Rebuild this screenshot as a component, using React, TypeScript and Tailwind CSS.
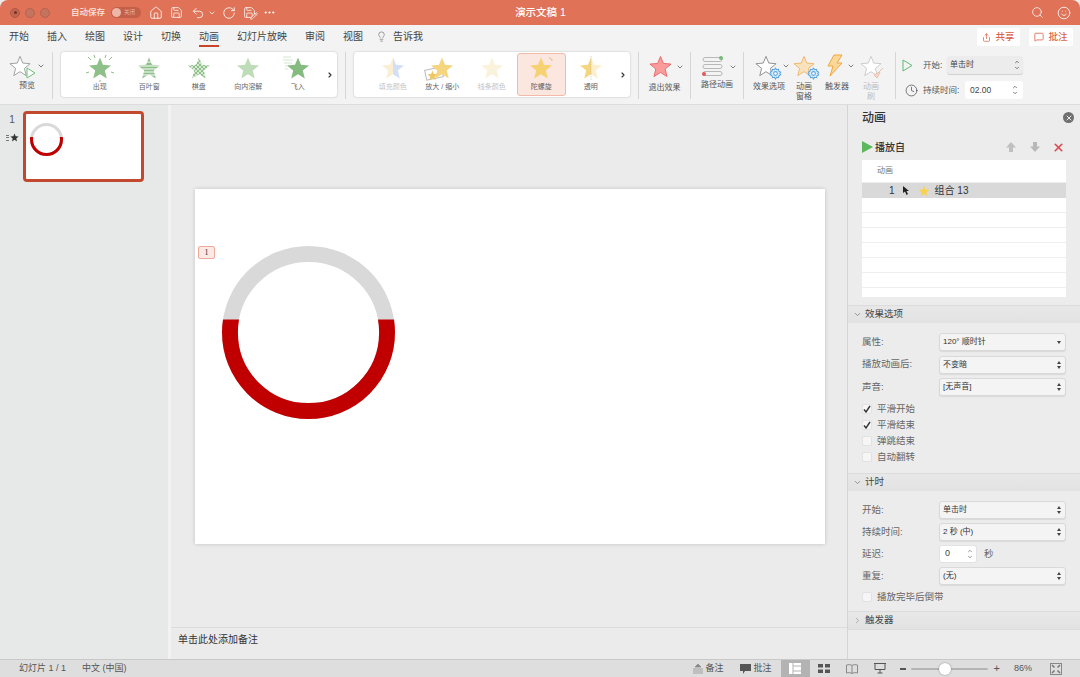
import { ChevronDown, ChevronRight, ChevronUp, Clock, House, Lightbulb, MessageSquare, MoreHorizontal, Pencil, RotateCw, Save, Search, Share, Smile, Undo2, X } from 'lucide-react';
import type { ReactNode } from 'react';

const STAR = '12,1.5 15,8.8 23,9.5 16.8,14.6 18.8,22.5 12,18.2 5.2,22.5 7.2,14.6 1,9.5 9,8.8';

function Star({ size = 24, fill = '#8fc08a', stroke = 'none', children }: { size?: number; fill?: string; stroke?: string; children?: ReactNode }) {
  return (
    <svg width={size} height={size} viewBox="0 0 24 24" className="shrink-0 overflow-visible">
      <polygon points={STAR} fill={fill} stroke={stroke} strokeWidth="1" strokeLinejoin="round" />
      {children}
    </svg>
  );
}

function Ring({ size, id }: { size: number; id: string }) {
  return (
    <svg width={size} height={size} viewBox="0 0 174 174" className="block">
      <defs>
        <clipPath id={id}>
          <rect x="0" y="74" width="174" height="100" />
        </clipPath>
      </defs>
      <circle cx="87" cy="87" r="79" fill="none" stroke="#d9d9d9" strokeWidth="16" />
      <circle cx="87" cy="87" r="79" fill="none" stroke="#c00000" strokeWidth="16" clipPath={`url(#${id})`} />
    </svg>
  );
}

function GalleryItem({ label, faded, active, children }: { label: string; faded?: boolean; active?: boolean; children: ReactNode }) {
  return (
    <div className={`w-[49.5px] h-[43px] flex flex-col items-center pt-[1px] rounded-[3px] border ${active ? 'bg-[#fbe6e0] border-[#f3b9aa]' : 'border-transparent'}`}>
      <div className="h-[26px] flex items-center justify-center">{children}</div>
      <span className={`mt-[1px] text-[7px] leading-[10px] whitespace-nowrap ${faded ? 'text-[#c4c4c4]' : 'text-[#666666]'}`}>{label}</span>
    </div>
  );
}

function Gallery({ children }: { children: ReactNode }) {
  return (
    <div className="mt-[2px] ml-[8px] w-[276px] h-[45px] bg-white rounded-[3px] shadow-[0_0_2px_rgba(0,0,0,0.25)] flex items-center pl-[14px]">
      {children}
      <div className="flex-1 flex justify-center">
        <ChevronRight size={8} strokeWidth={3.5} className="text-[#333333]" />
      </div>
    </div>
  );
}

function Divider({ className = '' }: { className?: string }) {
  return <div className={`mt-[2px] w-px h-[47px] bg-[#d6d6d6] shrink-0 ${className}`} />;
}

function RibbonLabel({ children, gray }: { children: ReactNode; gray?: boolean }) {
  return <div className={`text-[8px] leading-[10px] text-center whitespace-nowrap ${gray ? 'text-[#bdbdbd]' : 'text-[#555555]'}`}>{children}</div>;
}

function Gear({ size = 13 }: { size?: number }) {
  return (
    <svg width={size} height={size} viewBox="0 0 24 24" fill="#dceefb" stroke="#5aa5e0" strokeWidth="2">
      <path d="M12 2l2 3 3.5-.8.8 3.5 3.2 2-1.5 2.3 1.5 2.3-3.2 2-.8 3.5-3.5-.8-2 3-2-3-3.5.8-.8-3.5-3.2-2L3.800 12 2.300 9.700l3.200-2 .8-3.500 3.500.8z" />
      <circle cx="12" cy="12" r="3.500" fill="#ffffff" />
    </svg>
  );
}

function Field({ label, children }: { label: string; children: ReactNode }) {
  return (
    <div className="flex items-center h-[18px]">
      <span className="w-[77px] text-[9.5px] text-[#666666] whitespace-nowrap">{label}</span>
      {children}
    </div>
  );
}

function Select({ value, single }: { value: string; single?: boolean }) {
  return (
    <div className="w-[127px] h-[18px] px-[3px] flex items-center justify-between rounded-[3px] border border-[#d9d9d9] bg-[#f4f4f4] shadow-[0_1px_1px_rgba(0,0,0,0.08)] text-[8px] text-[#333333] whitespace-nowrap">
      <span>{value}</span>
      {single ? (
        <span className="w-0 h-0 mr-[1px] border-x-[2px] border-x-transparent border-t-[3px] border-t-[#444444]" />
      ) : (
        <span className="flex flex-col gap-[2px] mr-[1px]">
          <span className="w-0 h-0 border-x-[2px] border-x-transparent border-b-[3px] border-b-[#444444]" />
          <span className="w-0 h-0 border-x-[2px] border-x-transparent border-t-[3px] border-t-[#444444]" />
        </span>
      )}
    </div>
  );
}

function Check({ label, checked }: { label: string; checked?: boolean }) {
  return (
    <div className="flex items-center h-[16px]">
      <span className="w-[10px] h-[10px] rounded-[2px] bg-[#f6f6f6] border border-[#e2e2e2] flex items-center justify-center">
        {checked && (
          <svg width="8" height="8" viewBox="0 0 8 8"><path d="M1 4.500L3 7l4-6" fill="none" stroke="#333333" strokeWidth="1.400" /></svg>
        )}
      </span>
      <span className="ml-[5px] text-[9.5px] text-[#666666]">{label}</span>
    </div>
  );
}

function Section({ label, open }: { label: string; open?: boolean }) {
  return (
    <div className="h-[18px] flex items-center pl-[5px] bg-gradient-to-b from-[#e8e8e8] to-[#e2e2e2] border-t border-[#dcdcdc] text-[9.5px] text-[#444444]">
      {open ? <ChevronDown size={9} className="text-[#777777]" /> : <ChevronRight size={9} className="text-[#999999]" />}
      <span className="ml-[3px]">{label}</span>
    </div>
  );
}

export default function App() {
  return (
    <div className="w-[1080px] h-[677px] overflow-hidden flex flex-col bg-[#ebebeb] text-[#333333] font-['Liberation_Sans','Noto_Sans_CJK_SC',sans-serif]">
      {/* title bar */}
      <div className="h-[25px] shrink-0 flex items-center bg-[#df7257] rounded-t-[8px] text-white">
        <div className="flex-1 flex items-center pl-[10px]">
          <span className="w-[10px] h-[10px] rounded-full bg-[#c4644e] border border-[#b15a46] flex items-center justify-center"><span className="w-[3px] h-[3px] rounded-full bg-[#6e3427]" /></span>
          <span className="ml-[5px] w-[10px] h-[10px] rounded-full bg-[#c4735f] border border-[#b86350]" />
          <span className="ml-[5px] w-[10px] h-[10px] rounded-full bg-[#c4735f] border border-[#b86350]" />
          <span className="ml-[21px] text-[8.5px] font-medium text-[#fbe6df] whitespace-nowrap">自动保存</span>
          <span className="ml-[6px] w-[30px] h-[11px] rounded-full bg-[#c2604a] flex items-center">
            <span className="ml-[1px] w-[9px] h-[9px] rounded-full bg-[#eeb6a7]" />
            <span className="ml-[3px] text-[5.5px] text-[#eeb6a7]">关闭</span>
          </span>
          <House size={14} strokeWidth={1.4} className="ml-[8px]" />
          <Save size={13} strokeWidth={1.4} className="ml-[7px]" />
          <Undo2 size={14} strokeWidth={1.4} className="ml-[8px]" />
          <ChevronDown size={8} strokeWidth={2.5} className="ml-[3px]" />
          <RotateCw size={14} strokeWidth={1.4} className="ml-[6px]" />
          <span className="ml-[7px] relative">
            <Save size={13} strokeWidth={1.4} />
            <Pencil size={8} strokeWidth={2} fill="#df7257" className="absolute right-[-2px] bottom-[-1px]" />
          </span>
          <MoreHorizontal size={13} strokeWidth={2} className="ml-[7px]" />
        </div>
        <span className="text-[10.5px] font-medium whitespace-nowrap">演示文稿 1</span>
        <div className="flex-1 flex items-center justify-end pr-[9px]">
          <Search size={13} strokeWidth={1.4} />
          <Smile size={14} strokeWidth={1.4} className="ml-[13px]" />
        </div>
      </div>

      {/* tabs */}
      <div className="h-[25px] shrink-0 flex items-start pl-[9px] bg-[#f3f3f3] text-[10px] text-[#444444]">
        <div className="flex items-center gap-[18px] h-[23px]">
          <span>开始</span>
          <span>插入</span>
          <span>绘图</span>
          <span>设计</span>
          <span>切换</span>
          <span className="relative">动画<span className="absolute left-0 right-0 top-[16px] h-[2px] bg-[#c8442a]" /></span>
          <span>幻灯片放映</span>
          <span>审阅</span>
          <span>视图</span>
        </div>
        <div className="ml-[13px] h-[23px] flex items-center">
          <Lightbulb size={11} strokeWidth={1.2} className="text-[#555555]" />
          <span className="ml-[6px]">告诉我</span>
        </div>
        <div className="ml-auto mt-[3px] flex gap-[9px] pr-[7px] text-[#d9674c] text-[9.5px] font-medium">
          <span className="w-[43px] h-[18px] bg-white rounded-[2px] flex items-center justify-center gap-[4px]"><Share size={9} />共享</span>
          <span className="w-[44px] h-[18px] bg-white rounded-[2px] flex items-center justify-center gap-[4px]"><MessageSquare size={10} />批注</span>
        </div>
      </div>

      {/* ribbon */}
      <div className="h-[55px] shrink-0 flex items-start pl-[10px] bg-[#f3f3f3] border-b border-[#dcdcdc]">
        <div className="w-[34px] shrink-0 flex flex-col items-center pt-[5px]">
          <div className="flex items-center">
            <span className="relative flex">
              <Star size={22} fill="#ffffff" stroke="#9a9a9a" />
              <svg width="10" height="12" viewBox="0 0 10 12" className="absolute right-[-5px] bottom-[-2px]"><polygon points="1,1 9,6 1,11" fill="#ffffff" stroke="#6cc07a" strokeWidth="1" /></svg>
            </span>
            <ChevronDown size={8} strokeWidth={2.5} className="ml-[6px] text-[#666666]" />
          </div>
          <div className="mt-[4px]"><RibbonLabel>预览</RibbonLabel></div>
        </div>
        <Divider className="ml-[8px]" />
        <Gallery>
          <GalleryItem label="出现">
            <Star>
              <path d="M0 1l3 3M24 1l-3 3M-2 17l3-1M26 17l-3-1M12 26v-2M6 -1l1 3M18 -1l-1 3" stroke="#8fc08a" strokeWidth="1" />
            </Star>
          </GalleryItem>
          <GalleryItem label="百叶窗">
            <Star>
              <path d="M0 6h24M0 10h24M0 13h24M0 16h24M0 19h24" stroke="#ffffff" strokeWidth="1" />
            </Star>
          </GalleryItem>
          <GalleryItem label="棋盘">
            <svg width="24" height="24" viewBox="0 0 24 24" className="shrink-0">
              <defs>
                <pattern id="checker" width="4" height="4" patternUnits="userSpaceOnUse">
                  <rect width="4" height="4" fill="#d5e8d2" />
                  <rect width="2" height="2" fill="#8fc08a" />
                  <rect x="2" y="2" width="2" height="2" fill="#8fc08a" />
                </pattern>
              </defs>
              <polygon points={STAR} fill="url(#checker)" />
            </svg>
          </GalleryItem>
          <GalleryItem label="向内溶解">
            <Star fill="#bfdcb8" />
          </GalleryItem>
          <GalleryItem label="飞入">
            <Star fill="#86bb80">
              <path d="M-3 1h8M-3 4h10M-2 7h8M-1 10h2M-1 13h3" stroke="#c6e0c1" strokeWidth="0.8" />
            </Star>
          </GalleryItem>
        </Gallery>
        <Divider className="ml-[8px]" />
        <Gallery>
          <GalleryItem label="填充颜色" faded>
            <svg width="24" height="24" viewBox="0 0 24 24" className="shrink-0">
              <defs>
                <linearGradient id="fillsplit">
                  <stop offset="0.5" stopColor="#faefd2" />
                  <stop offset="0.5" stopColor="#d3dff5" />
                </linearGradient>
              </defs>
              <polygon points={STAR} fill="url(#fillsplit)" />
            </svg>
          </GalleryItem>
          <GalleryItem label="放大 / 缩小">
            <span className="relative flex">
              <span className="absolute left-[-5px] bottom-[1px] w-[18px] h-[11px] bg-white border border-[#bbbbbb] -rotate-12" />
              <span className="relative flex"><Star fill="#f5d67e" /></span>
              <span className="absolute left-[-3px] bottom-[-1px]"><Star size={11} fill="#efc763" /></span>
            </span>
          </GalleryItem>
          <GalleryItem label="线条颜色" faded>
            <Star fill="#fbf2dc" />
          </GalleryItem>
          <GalleryItem label="陀螺旋" active>
            <Star fill="#f6d272">
              <path d="M20 2c2 0 3 1 3 3" fill="none" stroke="#e0a84a" strokeWidth="0.7" />
            </Star>
          </GalleryItem>
          <GalleryItem label="透明">
            <svg width="24" height="24" viewBox="0 0 24 24" className="shrink-0">
              <defs>
                <linearGradient id="alphasplit">
                  <stop offset="0.5" stopColor="#f5d67e" />
                  <stop offset="0.5" stopColor="#fbefcd" />
                </linearGradient>
              </defs>
              <polygon points={STAR} fill="url(#alphasplit)" />
              <path d="M12 0v24" stroke="#a8a8a8" strokeWidth="0.5" strokeDasharray="1.5 1" />
            </svg>
          </GalleryItem>
        </Gallery>
        <Divider className="ml-[8px]" />
        <div className="w-[51px] shrink-0 flex flex-col items-center pt-[5px]">
          <div className="flex items-center pl-[4px]">
            <Star size={23} fill="#fb9c9c" stroke="#e86a6a" />
            <ChevronDown size={8} strokeWidth={2.5} className="ml-[4px] text-[#666666]" />
          </div>
          <div className="mt-[5px]"><RibbonLabel>退出效果</RibbonLabel></div>
        </div>
        <Divider />
        <div className="w-[52px] shrink-0 flex flex-col items-center pt-[6px]">
          <div className="flex items-center pl-[4px]">
            <svg width="22" height="21" viewBox="0 0 22 21" className="overflow-visible">
              <rect x="1" y="1.500" width="19" height="4" rx="2" fill="none" stroke="#a8a8a8" strokeWidth="0.8" />
              <rect x="1" y="8.500" width="19" height="4" rx="2" fill="none" stroke="#a8a8a8" strokeWidth="0.8" />
              <rect x="1" y="15.500" width="19" height="4" rx="2" fill="none" stroke="#a8a8a8" strokeWidth="0.8" />
              <circle cx="19" cy="2" r="2" fill="#77bb77" />
              <circle cx="2" cy="18" r="2" fill="#e25a5a" />
            </svg>
            <ChevronDown size={8} strokeWidth={2.5} className="ml-[5px] text-[#666666]" />
          </div>
          <div className="mt-[3px]"><RibbonLabel>路径动画</RibbonLabel></div>
        </div>
        <Divider />
        <div className="ml-[2px] w-[46px] shrink-0 pt-[5px] flex flex-col items-center">
          <div className="flex items-center pl-[6px]">
            <span className="relative flex">
              <Star size={22} fill="#ffffff" stroke="#8a8a8a" />
              <span className="absolute right-[-5px] bottom-[-3px]"><Gear /></span>
            </span>
            <ChevronDown size={8} strokeWidth={2.5} className="ml-[5px] text-[#666666]" />
          </div>
          <div className="mt-[5px]"><RibbonLabel>效果选项</RibbonLabel></div>
        </div>
        <div className="w-[24px] shrink-0 pt-[5px] flex flex-col items-center">
          <span className="relative flex">
            <Star size={22} fill="#fbe2bd" stroke="#f0b468" />
            <span className="absolute right-[-5px] bottom-[-3px]"><Gear /></span>
          </span>
          <div className="mt-[5px]"><RibbonLabel>动画<br />窗格</RibbonLabel></div>
        </div>
        <div className="ml-[2px] w-[38px] shrink-0 pt-[4px] flex flex-col items-center">
          <div className="flex items-center pl-[8px]">
            <svg width="16" height="23" viewBox="0 0 16 23">
              <polygon points="7,1 15,1 10,9 15,9 3,22 6,12 1,12" fill="#fbd79a" stroke="#f2a73c" strokeWidth="1" strokeLinejoin="round" />
            </svg>
            <ChevronDown size={8} strokeWidth={2.5} className="ml-[4px] text-[#666666]" />
          </div>
          <div className="mt-[5px]"><RibbonLabel>触发器</RibbonLabel></div>
        </div>
        <div className="w-[30px] shrink-0 pt-[5px] flex flex-col items-center">
          <span className="relative flex">
            <Star size={22} fill="#ffffff" stroke="#c8c8c8" />
            <svg width="10" height="12" viewBox="0 0 10 12" className="absolute right-[-2px] bottom-[-2px]"><path d="M9 1L4 6M6 5L3 11 0 8z" fill="#f8d8c4" stroke="#e8c2ae" /></svg>
          </span>
          <div className="mt-[5px]"><RibbonLabel gray>动画<br />刷</RibbonLabel></div>
        </div>
        <Divider className="ml-[9px]" />
        <div className="pl-[6px] pt-[6px] flex flex-col gap-[7px] text-[8.5px] text-[#555555]">
          <div className="flex items-center h-[18px]">
            <svg width="11" height="13" viewBox="0 0 11 13"><polygon points="1,1 10,6.500 1,12" fill="none" stroke="#5dbb72" strokeWidth="1" /></svg>
            <span className="ml-[10px] w-[24px]">开始:</span>
            <div className="w-[76px] h-[18px] px-[3px] rounded-[3px] bg-[#ececec] shadow-[0_1px_1px_rgba(0,0,0,0.15)] flex items-center justify-between text-[8px] text-[#444444]">
              单击时
              <span className="flex flex-col text-[#555555]"><ChevronUp size={6} strokeWidth={3} /><ChevronDown size={6} strokeWidth={3} /></span>
            </div>
          </div>
          <div className="flex items-center h-[18px] pl-[3px]">
            <Clock size={13} strokeWidth={1.3} className="text-[#444444]" />
            <span className="ml-[5px] w-[42px] whitespace-nowrap">持续时间:</span>
            <div className="w-[58px] h-[18px] px-[5px] rounded-[3px] bg-white flex items-center justify-between text-[8.5px] text-[#444444]">
              02.00
              <span className="flex flex-col text-[#555555]"><ChevronUp size={6} strokeWidth={3} /><ChevronDown size={6} strokeWidth={3} /></span>
            </div>
          </div>
        </div>
      </div>

      {/* body */}
      <div className="flex-1 min-h-0 flex">
        <div className="w-[168px] shrink-0 bg-[#e7e8e8] flex items-start pl-[4px] pt-[6px]">
          <div className="w-[19px] pr-[3px] flex flex-col items-center">
            <span className="mt-[2px] text-[10px] leading-[14px] text-[#555555]">1</span>
            <span className="mt-[6px] flex items-center">
              <span className="flex flex-col gap-[1.5px] mr-[1px]">
                <span className="w-[3px] h-px bg-[#777777]" />
                <span className="w-[3px] h-px bg-[#777777]" />
                <span className="w-[3px] h-px bg-[#777777]" />
              </span>
              <Star size={9} fill="#333333" />
            </span>
          </div>
          <div className="w-[121px] h-[71px] bg-white rounded-[4px] border-[3px] border-[#c2492d] pl-[4px] pt-[9px]">
            <Ring size={33} id="ring-thumb" />
          </div>
        </div>
        <div className="w-[3px] shrink-0 bg-[#f2f2f2]" />
        <div className="flex-1 min-w-0 flex flex-col">
          <div className="flex-1 min-h-0 pl-[24px] pt-[84px] bg-[#ebebeb]">
            <div className="relative w-[630px] h-[355px] bg-white shadow-[0_0_4px_rgba(0,0,0,0.18)]">
              <span className="absolute left-[3px] top-[57px] w-[17px] h-[13px] rounded-[2px] bg-[#fbe9e5] border border-[#efa99a] flex items-center justify-center text-[9px] text-[#444444] font-['Liberation_Serif',serif]">1</span>
              <div className="absolute left-[27px] top-[57px]">
                <Ring size={173} id="ring-slide" />
              </div>
            </div>
          </div>
          <div className="h-[32px] shrink-0 border-t border-[#dcdcdc] pl-[7px] pt-[4px] text-[10px] text-[#333333]">单击此处添加备注</div>
        </div>

        {/* animation pane */}
        <div className="w-[233px] shrink-0 border-l border-[#d4d4d4] bg-[#ececec] flex flex-col">
          <div className="h-[25px] shrink-0 flex items-center justify-between pl-[14px] pr-[6px]">
            <span className="text-[12px] font-medium text-[#333333]">动画</span>
            <span className="w-[11px] h-[11px] rounded-full bg-[#6f6f6f] flex items-center justify-center"><X size={8} strokeWidth={3} className="text-[#ececec]" /></span>
          </div>
          <div className="h-[30px] shrink-0 flex items-center pl-[14px] pr-[15px] pt-[4px]">
            <svg width="11" height="12" viewBox="0 0 11 12"><polygon points="0,0 11,6 0,12" fill="#5cb85c" /></svg>
            <span className="ml-[2px] text-[10px] font-medium text-[#333333]">播放自</span>
            <svg width="12" height="12" viewBox="0 0 12 12" className="ml-auto"><path d="M6 1L1 6.500h3V11h4V6.500h3z" fill="#c0c0c0" /></svg>
            <svg width="12" height="12" viewBox="0 0 12 12" className="ml-[12px]"><path d="M6 11L1 5.500h3V1h4v4.500h3z" fill="#b8b8b8" /></svg>
            <X size={13} strokeWidth={3} className="ml-[11px] text-[#e0474c]" />
          </div>
          <div className="mx-[14px] w-[204px] h-[137px] shrink-0 bg-white flex flex-col text-[#333333]">
            <div className="h-[23px] flex items-center pl-[15px] text-[8px] text-[#777777] border-b border-[#eeeeee]">动画</div>
            <div className="h-[15px] flex items-center bg-[#d9d9d9] text-[10px]">
              <span className="ml-[27px]">1</span>
              <svg width="6" height="9" viewBox="0 0 6 9" className="ml-[8px]"><polygon points="0,0 0,7 2,5.500 3.500,9 5,8 3.500,5 6,5" fill="#222222" /></svg>
              <span className="ml-[9px]"><Star size={12} fill="#fbd24e" /></span>
              <span className="ml-[5px]">组合 13</span>
            </div>
            <div className="h-[15px] border-b border-[#eeeeee]" />
            <div className="h-[15px] border-b border-[#eeeeee]" />
            <div className="h-[15px] border-b border-[#eeeeee]" />
            <div className="h-[15px] border-b border-[#eeeeee]" />
            <div className="h-[15px] border-b border-[#eeeeee]" />
            <div className="h-[15px] border-b border-[#eeeeee]" />
          </div>
          <div className="h-[8px] shrink-0" />
          <Section label="效果选项" open />
          <div className="h-[150px] shrink-0 pl-[14px] pt-[10px] flex flex-col">
            <div className="flex flex-col gap-[4.500px]">
              <Field label="属性:"><Select value="120° 顺时针" single /></Field>
              <Field label="播放动画后:"><Select value="不变暗" /></Field>
              <Field label="声音:"><Select value="[无声音]" /></Field>
            </div>
            <div className="mt-[5px] flex flex-col">
              <Check label="平滑开始" checked />
              <Check label="平滑结束" checked />
              <Check label="弹跳结束" />
              <Check label="自动翻转" />
            </div>
          </div>
          <Section label="计时" open />
          <div className="h-[120px] shrink-0 pl-[14px] pt-[10px] flex flex-col gap-[4px]">
            <Field label="开始:"><Select value="单击时" /></Field>
            <Field label="持续时间:"><Select value="2 秒 (中)" /></Field>
            <Field label="延迟:">
              <div className="w-[38px] h-[18px] pl-[5px] pr-[3px] flex items-center justify-between rounded-[3px] bg-white border border-[#e2e2e2] text-[9px] text-[#444444]">
                0
                <span className="flex flex-col text-[#777777]"><ChevronUp size={6} strokeWidth={3} /><ChevronDown size={6} strokeWidth={3} /></span>
              </div>
              <span className="ml-[7px] text-[9.5px] text-[#666666]">秒</span>
            </Field>
            <Field label="重复:"><Select value="(无)" /></Field>
            <Check label="播放完毕后倒带" />
          </div>
          <Section label="触发器" />
          <div className="flex-1 border-t border-[#dcdcdc]" />
        </div>
      </div>

      {/* status bar */}
      <div className="h-[18px] shrink-0 flex items-center pl-[19px] bg-[#dedede] border-t border-[#c8c8c8] text-[9px] text-[#555555]">
        <span>幻灯片 1 / 1</span>
        <span className="ml-[16px]">中文 (中国)</span>
        <div className="ml-auto flex items-center h-full pr-[18px]">
          <svg width="10" height="10" viewBox="0 0 10 10"><path d="M5 0L2 3h6zM0 5h10M0 7h10M0 9h10" fill="#888888" stroke="#888888" strokeWidth="0.7" /></svg>
          <span className="ml-[3px]">备注</span>
          <svg width="11" height="10" viewBox="0 0 11 10" className="ml-[16px]"><path d="M0 0h11v7H5L3 10V7H0z" fill="#555555" /></svg>
          <span className="ml-[3px]">批注</span>
          <span className="ml-[9px] w-[29px] h-full bg-[#b3b3b3] flex items-center justify-center">
            <svg width="12" height="11" viewBox="0 0 12 11"><rect width="12" height="11" fill="#ffffff" /><path d="M4 0v11M4 3h8M4 8h8" stroke="#b3b3b3" strokeWidth="1" /></svg>
          </span>
          <svg width="12" height="9" viewBox="0 0 12 9" className="ml-[8px]"><path d="M0 0h5v3.500H0zM7 0h5v3.500H7zM0 5.500h5V9H0zM7 5.500h5V9H7z" fill="#555555" /></svg>
          <svg width="12" height="10" viewBox="0 0 12 10" className="ml-[16px]"><path d="M6 1.500C5 .5 2 .5.500 1v8c1.500-.5 4.500-.5 5.500.5 1-1 4-1 5.500-.5V1C10 .5 7 .5 6 1.500zM6 1.500v8" fill="none" stroke="#888888" /></svg>
          <svg width="12" height="11" viewBox="0 0 12 11" className="ml-[16px]"><path d="M0 .5h12M1 .5v6h10v-6M6 6.500V10M3.500 10h5" fill="none" stroke="#555555" /></svg>
          <span className="ml-[14px] w-[6px] h-[2px] bg-[#555555]" />
          <div className="ml-[5px] w-[77px] h-[2px] rounded-full bg-[#b4b4b4] flex items-center">
            <span className="ml-[28px] w-[12px] h-[12px] rounded-full bg-white shadow-[0_0_2px_rgba(0,0,0,0.4)]" />
          </div>
          <span className="ml-[6px] text-[11px] leading-none text-[#555555]">+</span>
          <span className="ml-[14px] w-[26px]">86%</span>
          <svg width="12" height="12" viewBox="0 0 12 12" className="ml-[10px]"><rect x=".5" y=".5" width="11" height="11" fill="none" stroke="#888888" /><path d="M2 2l2.500 2.500M10 2L7.500 4.500M2 10l2.500-2.500M10 10L7.500 7.500" stroke="#777777" strokeWidth="1.500" /></svg>
        </div>
      </div>
    </div>
  );
}
